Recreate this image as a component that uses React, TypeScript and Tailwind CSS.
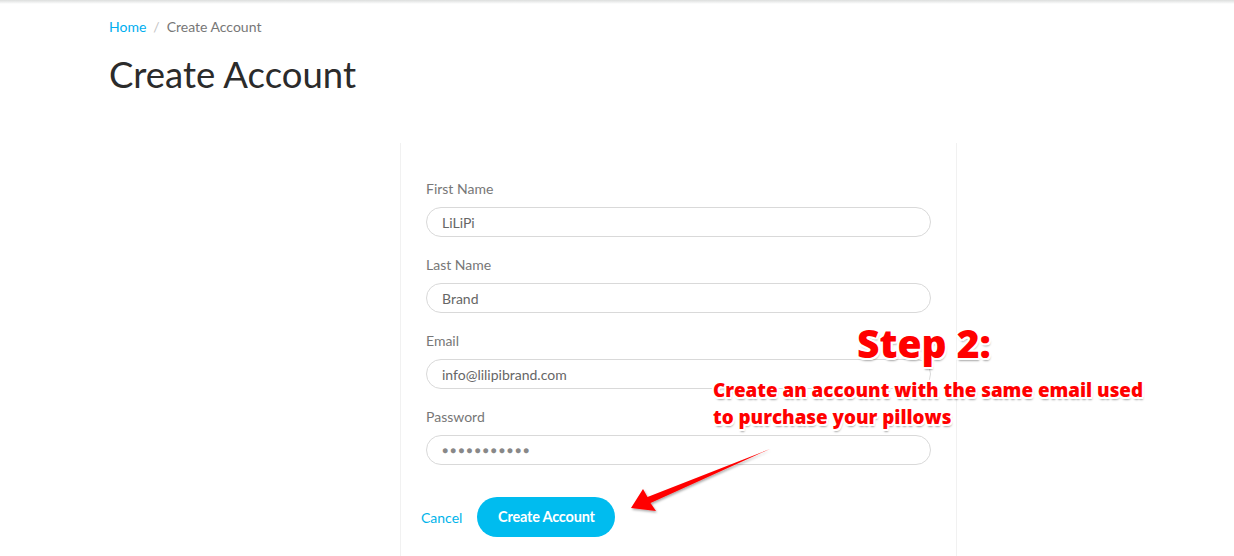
import React from "react";

const fields = [
  { label: "First Name", value: "LiLiPi" },
  { label: "Last Name", value: "Brand" },
  { label: "Email", value: "info@lilipibrand.com" },
  { label: "Password", value: "●●●●●●●●●●●", secret: true },
];

const outline =
  "[text-shadow:2px_0_0_#fff,-2px_0_0_#fff,0_2px_0_#fff,0_-2px_0_#fff,1.5px_1.5px_0_#fff,-1.5px_-1.5px_0_#fff,1.5px_-1.5px_0_#fff,-1.5px_1.5px_0_#fff,1px_3px_2px_rgba(0,0,0,0.35)]";

export default function App() {
  return (
    <div className="relative w-[1234px] h-[556px] overflow-hidden bg-white font-['Lato',sans-serif]">
      {/* top shadow strip */}
      <div className="h-[4px] bg-gradient-to-b from-[#dcdedd] to-white" />

      <div className="pl-[109px]">
        {/* Breadcrumb */}
        <div className="mt-[15px] flex items-center gap-[7px] text-[14px] leading-[16px]">
          <a href="#" className="text-[#00aeef]">Home</a>
          <span className="text-[#c4c4c4]">/</span>
          <span className="text-[#777]">Create Account</span>
        </div>

        <h1 className="mt-[17px] text-[36.5px] leading-[44px] text-[#2b2b2b] font-normal">
          Create Account
        </h1>
      </div>

      {/* Form card */}
      <div className="mt-[47px] ml-[400px] w-[557px] h-[420px] border-x border-[#f1f1f1] px-[25px] pt-[38px]">
        {fields.map((f) => (
          <div key={f.label} className="mb-[20px]">
            <label className="block text-[14px] leading-[16px] text-[#777]">{f.label}</label>
            <div className="mt-[10px] h-[30px] rounded-full border border-[#d9d9d9] pl-[15px] flex items-center text-[14px] text-[#666]">
              {f.secret ? (
                <span className="text-[10px] tracking-[2.1px] text-[#888]">{f.value}</span>
              ) : (
                f.value
              )}
            </div>
          </div>
        ))}

        <div className="mt-[32px] flex items-center gap-[15px] -ml-[5px]">
          <a href="#" className="text-[14px] text-[#00b4ea]">Cancel</a>
          <button className="h-[40px] w-[138px] rounded-full bg-[#00bcef] text-white text-[14.5px] font-bold tracking-[-0.2px]">
            Create Account
          </button>
        </div>
      </div>

      {/* Annotation overlay */}
      <div
        className={`absolute left-[857px] top-[318px] text-[39px] leading-[50px] font-extrabold text-[#ff0000] font-['Open_Sans',sans-serif] ${outline}`}
      >
        Step 2:
      </div>
      <div
        className={`absolute left-[713px] top-[377px] text-[18.8px] leading-[27px] font-extrabold text-[#ff0000] font-['Open_Sans',sans-serif] ${outline}`}
      >
        Create an account with the same email used
        <br />
        to purchase your pillows
      </div>

      <svg
        className="absolute left-0 top-0 pointer-events-none"
        width="1234"
        height="556"
        viewBox="0 0 1234 556"
      >
        <defs>
          <filter id="sh" x="-10%" y="-10%" width="120%" height="130%">
            <feDropShadow dx="1" dy="1.5" stdDeviation="1" floodColor="#000" floodOpacity="0.35" />
          </filter>
        </defs>
        <polygon
          points="631,508 643,489 647.5,497 770,449 650.5,503 656,511"
          fill="#ff0000"
          filter="url(#sh)"
        />
      </svg>
    </div>
  );
}
